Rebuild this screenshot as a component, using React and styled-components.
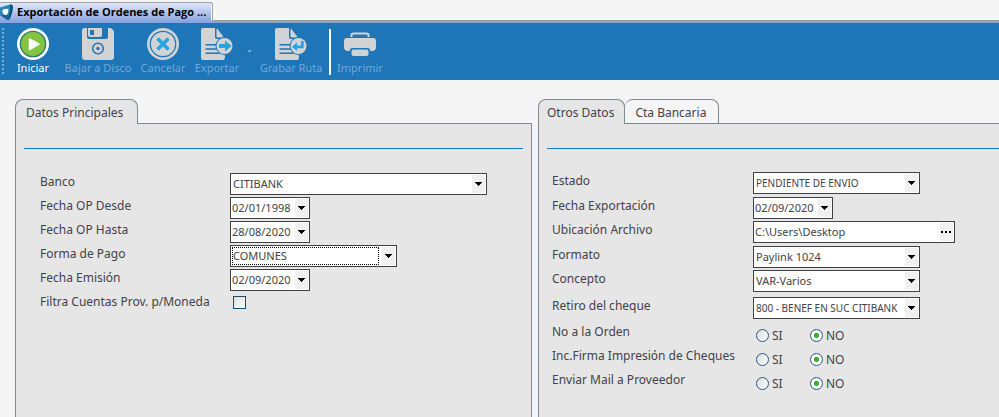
import React, { useState } from "react";
import styled, { createGlobalStyle, css } from "styled-components";

const color = {
  page: "#f5f5f5",
  panel: "#e6e6e6",
  brand: "#1e75b8",
  rule: "#0f79c4",
  edge: "#7b8a93",
  ink: "#434247",
  field: "#3f3f44",
  muted: "#6ea9d9",
  icon: "#d1d3d4",
  accent: "#27a3df",
};

const GlobalStyle = createGlobalStyle`
  *, *::before, *::after { box-sizing: border-box; }
  body {
    margin: 0;
    background: ${color.page};
    color: ${color.ink};
    font: 12px/16px "Noto Sans", "Open Sans", sans-serif;
  }
  button, input, select { font: inherit; color: inherit; margin: 0; }
`;

const Page = styled.div`
  display: flex;
  flex-direction: column;
  min-height: 100vh;
  overflow: hidden;
`;

const WindowTabs = styled.header`
  display: flex;
  align-items: flex-end;
  height: 23px;
  border-bottom: 2px solid #8aa4dc;
  box-shadow: inset 0 -1px #9a9a9a;
`;

const WindowTab = styled.h1`
  display: flex;
  align-items: center;
  gap: 4px;
  height: 19px;
  margin: 0;
  padding-right: 6px;
  border: 1px solid #a3a3a3;
  border-left: 0;
  border-top-right-radius: 3px;
  border-bottom: 0;
  box-shadow: inset -1px 0 #f4f6fc;
  background: linear-gradient(#dfe6f8, #8ba6e0);
  color: #000;
  font: bold 11px/16px "Open Sans", sans-serif;
  white-space: nowrap;
  svg { flex: none; }
`;

const Toolbar = styled.nav`
  display: flex;
  align-items: flex-start;
  height: 57px;
  padding: 5px 2px;
  background: ${color.brand};
`;

const Grip = styled.span`
  width: 2px;
  height: 47px;
  background: repeating-linear-gradient(#7fb0da 0 2px, transparent 2px 4px);
`;

const ToolButton = styled.button`
  display: flex;
  flex-direction: column;
  align-items: center;
  width: ${(p) => p.$width}px;
  padding: 0;
  border: 0;
  background: none;
  color: ${color.muted};
  font-size: 11px;
  line-height: 16px;
  white-space: nowrap;
  &:enabled { color: #fff; }
  svg { display: block; }
`;

const MenuArrow = styled.button`
  width: 14px;
  height: 47px;
  padding: 0;
  border: 0;
  background: none;
  svg { display: block; margin: 0 auto; }
`;

const Divider = styled.span`
  width: 2px;
  height: 46px;
  margin: 1px 0 0 3px;
  background: #fff;
`;

const Workspace = styled.main`
  flex: 1;
  display: grid;
  grid-template-columns: 517fr 477fr;
  gap: 6px;
  margin-right: -16px;
  padding: 19px 0 0 15px;
`;

const Column = styled.section`
  display: flex;
  flex-direction: column;
`;

const TabList = styled.div`
  display: flex;
  height: 24px;
`;

const Tab = styled.button`
  height: 24px;
  padding: 2px ${(p) => p.$trail}px 0 ${(p) => p.$lead}px;
  border: 1px solid ${color.edge};
  border-bottom: 0;
  border-radius: 8px 8px 0 0;
  background: ${color.page};
  white-space: nowrap;
  & + & { border-left: 0; }
  ${(p) =>
    p.$active &&
    css`
      z-index: 1;
      height: 25px;
      padding-bottom: 1px;
      background: ${color.panel};
    `}
`;

const Panel = styled.div`
  flex: 1;
  padding: 24px 8px 8px;
  border: 1px solid ${color.edge};
  border-bottom: 0;
  background: ${color.panel};
`;

const Rule = styled.hr`
  height: 0;
  margin: 0;
  border: 0;
  border-top: 1px solid ${color.rule};
`;

const Form = styled.form`
  display: flex;
  flex-direction: column;
  padding: ${(p) => (p.$wide ? "24px 0 0 16px" : "23px 0 0 5px")};
`;

const Row = styled.div`
  display: grid;
  grid-template-columns: ${(p) => (p.$wide ? 190 : 201)}px 1fr;
  align-items: start;
  min-height: ${(p) => p.$height || 24}px;
`;

const Caption = styled.label`
  padding-top: 1px;
  white-space: nowrap;
`;

const FieldBox = styled.div`
  display: grid;
  grid-template-columns: 1fr 17px;
  align-items: center;
  width: ${(p) => p.$width}px;
  height: 22px;
  border: 1px solid ${color.field};
  background: #fff;
  font-size: ${(p) => (p.$dense ? 10 : 11)}px;
`;

const Picker = styled.select`
  grid-area: 1 / 1 / 2 / 3;
  width: 100%;
  height: 20px;
  padding: 0 15px 0 2px;
  border: 0;
  outline: 0;
  appearance: none;
  background: none;
  overflow: hidden;
`;

const FocusRing = styled.span`
  grid-area: 1 / 1 / 2 / 2;
  height: 18px;
  margin: 0 0 0 1px;
  border: 1px dotted #000;
  pointer-events: none;
`;

const Cell = styled.span`
  grid-area: 1 / 2 / 2 / 3;
  display: grid;
  place-items: center;
  width: 13px;
  height: 18px;
  margin-left: 3px;
  background: #f0f0f0;
  pointer-events: none;
`;

const TextInput = styled.input`
  width: 100%;
  height: 20px;
  padding: 0 0 1px 1px;
  border: 0;
  outline: 0;
  background: none;
`;

const CellButton = styled.button`
  display: grid;
  place-items: center;
  width: 13px;
  height: 18px;
  margin-left: 3px;
  padding: 0;
  border: 0;
  background: #f0f0f0;
`;

const CheckSlot = styled.span`
  display: flex;
  padding: 3px 0 0 3px;
`;

const Check = styled.input`
  appearance: none;
  width: 13px;
  height: 13px;
  border: 1px solid #1c4a70;
  background: linear-gradient(135deg, #dcdcd7, #fff);
  &:checked { background: ${color.brand}; }
`;

const Options = styled.div`
  display: flex;
  padding: 4px 0 0 3px;
`;

const Option = styled.label`
  display: flex;
  align-items: center;
  gap: 3px;
  width: 54px;
  height: 17px;
`;

const Radio = styled.input`
  appearance: none;
  width: 13px;
  height: 13px;
  border: 1px solid #2a5785;
  border-radius: 50%;
  background: linear-gradient(135deg, #dcdcd7, #fff);
  &:checked {
    background: radial-gradient(circle, #35b535 0 2px, #1f9a1f 2px, #fbfbfa 3px);
  }
`;

const Caret = () => (
  <svg width="7" height="4" viewBox="0 0 7 4" shapeRendering="crispEdges" aria-hidden="true">
    <path d="M0 0h7v1H6v1H5v1H4v1H3V3H2V2H1V1H0z" fill="#000" />
  </svg>
);

const Dots = () => (
  <svg width="11" height="2" viewBox="0 0 11 2" shapeRendering="crispEdges" aria-hidden="true">
    <path d="M0 0h2v2H0zM4 0h2v2H4zM8 0h2v2H8z" fill="#000" />
  </svg>
);

const AppMark = () => (
  <svg width="13" height="17" viewBox="0 0 13 17" aria-hidden="true">
    <path d="M0 3.500 10 .5Q13 0 13 3 12 11 9.500 15 8.500 16.500 6.500 15.500L0 11z" fill="#2a86b8" />
    <path d="M10 .5Q13 0 13 3 12 11 9.500 15 8.500 16.500 7 15.500 11 8 10 .5z" fill="#14507f" />
    <path d="M0 11 6.500 15.500Q8.500 16.500 9.500 15L7.500 11z" fill="#1a659c" />
    <path d="M3 5.500Q8 4 8.500 5.500 8.500 9 6.500 11 5 11.500 3 9.500 1.500 7 3 5.500z" fill="#fff" />
  </svg>
);

const StartIcon = () => (
  <svg width="32" height="32" viewBox="0 0 32 32" aria-hidden="true">
    <circle cx="16" cy="16" r="16" fill="#fff" />
    <circle cx="16" cy="16" r="12.6" fill="#86c440" stroke="#2b7a72" strokeWidth="1.4" />
    <path d="M12.5 11v10.5L22 16.2z" fill="#fff" stroke="#fff" strokeWidth="1.5" strokeLinejoin="round" />
  </svg>
);

const DiskIcon = () => (
  <svg width="32" height="32" viewBox="0 0 32 32" aria-hidden="true">
    <path d="M3 0h2v9q0 2 2 2h17q2 0 2-2V0h2q1 0 2 1l1 1q1 1 1 2v25q0 3-3 3H3q-3 0-3-3V3Q0 0 3 0z" fill={color.icon} />
    <path d="M6 0h14v7q0 2-2 2H8Q6 9 6 7zM8 2v5h4V2z" fill={color.icon} fillRule="evenodd" />
    <circle cx="16" cy="20.5" r="5.3" fill="none" stroke={color.brand} strokeWidth="1.5" />
    <circle cx="16" cy="20.5" r="1.7" fill={color.brand} />
  </svg>
);

const CancelIcon = () => (
  <svg width="32" height="32" viewBox="0 0 32 32" aria-hidden="true">
    <circle cx="16" cy="16" r="16" fill={color.icon} />
    <circle cx="16" cy="16" r="12.7" fill="none" stroke="#2879b6" strokeWidth="1.3" />
    <path d="M10.5 10.5 21.5 21.5M21.5 10.5 10.5 21.5" stroke={color.accent} strokeWidth="3.6" />
  </svg>
);

const Sheet = ({ children }) => (
  <svg width="32" height="32" viewBox="0 0 32 32" aria-hidden="true">
    <path d="M2 0h12v9q0 2 2 2h7v21H2q-2 0-2-2V2Q0 0 2 0z" fill={color.icon} />
    <path d="M16 1v8h6z" fill={color.icon} stroke={color.icon} strokeLinejoin="round" />
    <path d="M4.5 16.7H17M4.5 21H17M4.5 25.3h14" stroke={color.brand} strokeWidth="1.5" />
    <circle cx="23.5" cy="18" r="9" fill={color.brand} />
    <path d="M19 26q3 2 5 1v2q0 3-3 3h-3z" fill={color.icon} />
    <circle cx="23.5" cy="18" r="8" fill={color.icon} />
    {children}
  </svg>
);

const ExportIcon = () => (
  <Sheet>
    <path d="M18 16h6v-3.5l6.5 5.5-6.5 5.5V20h-6z" fill={color.accent} />
  </Sheet>
);

const SaveIcon = () => (
  <Sheet>
    <path d="M26 13h2.7v7.2H22V23l-5-4.3 5-4.3v3h4z" fill={color.accent} />
  </Sheet>
);

const PrintIcon = () => (
  <svg width="32" height="32" viewBox="0 0 32 32" aria-hidden="true">
    <path d="M7.5 9V7.5Q7.500 5.500 9.500 5.500h13q2 0 2 2V9" fill="none" stroke={color.icon} strokeWidth="2" />
    <path d="M3 10h26q3 0 3 3v6q0 4-4 4h-2v-1q0-2-3-2H9q-3 0-3 2v1H4q-4 0-4-4v-6q0-3 3-3z" fill={color.icon} />
    <rect x="7.500" y="21.500" width="17" height="6.500" rx="2" fill={color.icon} />
  </svg>
);

const Choice = ({ id, width, options, focused, dense }) => (
  <FieldBox $width={width} $dense={dense}>
    <Picker id={id} defaultValue={options[0]}>
      {options.map((o) => (
        <option key={o}>{o}</option>
      ))}
    </Picker>
    {focused && <FocusRing />}
    <Cell>
      <Caret />
    </Cell>
  </FieldBox>
);

const Entry = ({ id, width, value, browse }) => (
  <FieldBox $width={width}>
    <TextInput id={id} type="text" defaultValue={value} />
    <CellButton type="button" aria-label={browse ? "Examinar" : "Calendario"}>
      {browse ? <Dots /> : <Caret />}
    </CellButton>
  </FieldBox>
);

const YesNo = ({ name, label }) => (
  <Options role="radiogroup" aria-label={label}>
    {["SI", "NO"].map((v) => (
      <Option key={v}>
        <Radio type="radio" name={name} value={v} defaultChecked={v === "NO"} />
        {v}
      </Option>
    ))}
  </Options>
);

const mainFields = [
  { id: "banco", label: "Banco", kind: "choice", width: 257, options: ["CITIBANK"] },
  { id: "desde", label: "Fecha OP Desde", kind: "entry", width: 80, value: "02/01/1998" },
  { id: "hasta", label: "Fecha OP Hasta", kind: "entry", width: 80, value: "28/08/2020" },
  { id: "forma", label: "Forma de Pago", kind: "choice", width: 167, options: ["COMUNES"], focused: true },
  { id: "emision", label: "Fecha Emisión", kind: "entry", width: 80, value: "02/09/2020" },
  { id: "filtra", label: "Filtra Cuentas Prov. p/Moneda", kind: "check" },
];

const otherFields = [
  { id: "estado", label: "Estado", kind: "choice", width: 167, options: ["PENDIENTE DE ENVIO"], dense: true, height: 25 },
  { id: "exportacion", label: "Fecha Exportación", kind: "entry", width: 80, value: "02/09/2020" },
  { id: "archivo", label: "Ubicación Archivo", kind: "entry", width: 202, value: "C:\\Users\\Desktop", browse: true, height: 25 },
  { id: "formato", label: "Formato", kind: "choice", width: 167, options: ["Paylink 1024"] },
  { id: "concepto", label: "Concepto", kind: "choice", width: 167, options: ["VAR-Varios"], height: 27 },
  { id: "retiro", label: "Retiro del cheque", kind: "choice", width: 167, options: ["800 - BENEF EN SUC CITIBANK"], dense: true, height: 26 },
  { id: "orden", label: "No a la Orden", kind: "yesno" },
  { id: "firma", label: "Inc.Firma Impresión de Cheques", kind: "yesno" },
  { id: "mail", label: "Enviar Mail a Proveedor", kind: "yesno" },
];

const Control = ({ field }) => {
  if (field.kind === "choice") return <Choice {...field} />;
  if (field.kind === "entry") return <Entry {...field} />;
  if (field.kind === "check")
    return (
      <CheckSlot>
        <Check id={field.id} type="checkbox" />
      </CheckSlot>
    );
  return <YesNo name={field.id} label={field.label} />;
};

const Fields = ({ fields, wide }) => (
  <Form $wide={wide}>
    {fields.map((f) => (
      <Row key={f.id} $wide={wide} $height={f.height}>
        <Caption as={f.kind === "yesno" ? "span" : "label"} htmlFor={f.kind === "yesno" ? undefined : f.id}>
          {f.label}
        </Caption>
        <Control field={f} />
      </Row>
    ))}
  </Form>
);

export default function App() {
  const [tab, setTab] = useState("otros");
  return (
    <Page>
      <GlobalStyle />
      <WindowTabs>
        <WindowTab>
          <AppMark />
          Exportación de Ordenes de Pago ...
        </WindowTab>
      </WindowTabs>
      <Toolbar>
        <Grip />
        <ToolButton type="button" $width={58}><StartIcon />Iniciar</ToolButton>
        <ToolButton type="button" $width={72} disabled><DiskIcon />Bajar a Disco</ToolButton>
        <ToolButton type="button" $width={58} disabled><CancelIcon />Cancelar</ToolButton>
        <ToolButton type="button" $width={50} disabled><ExportIcon />Exportar</ToolButton>
        <MenuArrow type="button" disabled aria-label="Opciones de exportación">
          <svg width="5" height="47" viewBox="0 0 5 47" aria-hidden="true">
            <path d="M0 22h5l-2.500 3z" fill={color.muted} />
          </svg>
        </MenuArrow>
        <ToolButton type="button" $width={70} disabled><SaveIcon />Grabar Ruta</ToolButton>
        <Divider />
        <ToolButton type="button" $width={58} disabled><PrintIcon />Imprimir</ToolButton>
      </Toolbar>
      <Workspace>
        <Column>
          <TabList role="tablist">
            <Tab type="button" role="tab" aria-selected="true" $active $lead={10} $trail={14}>Datos Principales</Tab>
          </TabList>
          <Panel>
            <Rule />
            <Fields fields={mainFields} wide />
          </Panel>
        </Column>
        <Column>
          <TabList role="tablist">
            <Tab type="button" role="tab" aria-selected={tab === "otros"} $active={tab === "otros"} $lead={8} $trail={10} onClick={() => setTab("otros")}>
              Otros Datos
            </Tab>
            <Tab type="button" role="tab" aria-selected={tab === "cuenta"} $active={tab === "cuenta"} $lead={10} $trail={12} onClick={() => setTab("cuenta")}>
              Cta Bancaria
            </Tab>
          </TabList>
          <Panel>
            <Rule />
            {tab === "otros" && <Fields fields={otherFields} />}
          </Panel>
        </Column>
      </Workspace>
    </Page>
  );
}
